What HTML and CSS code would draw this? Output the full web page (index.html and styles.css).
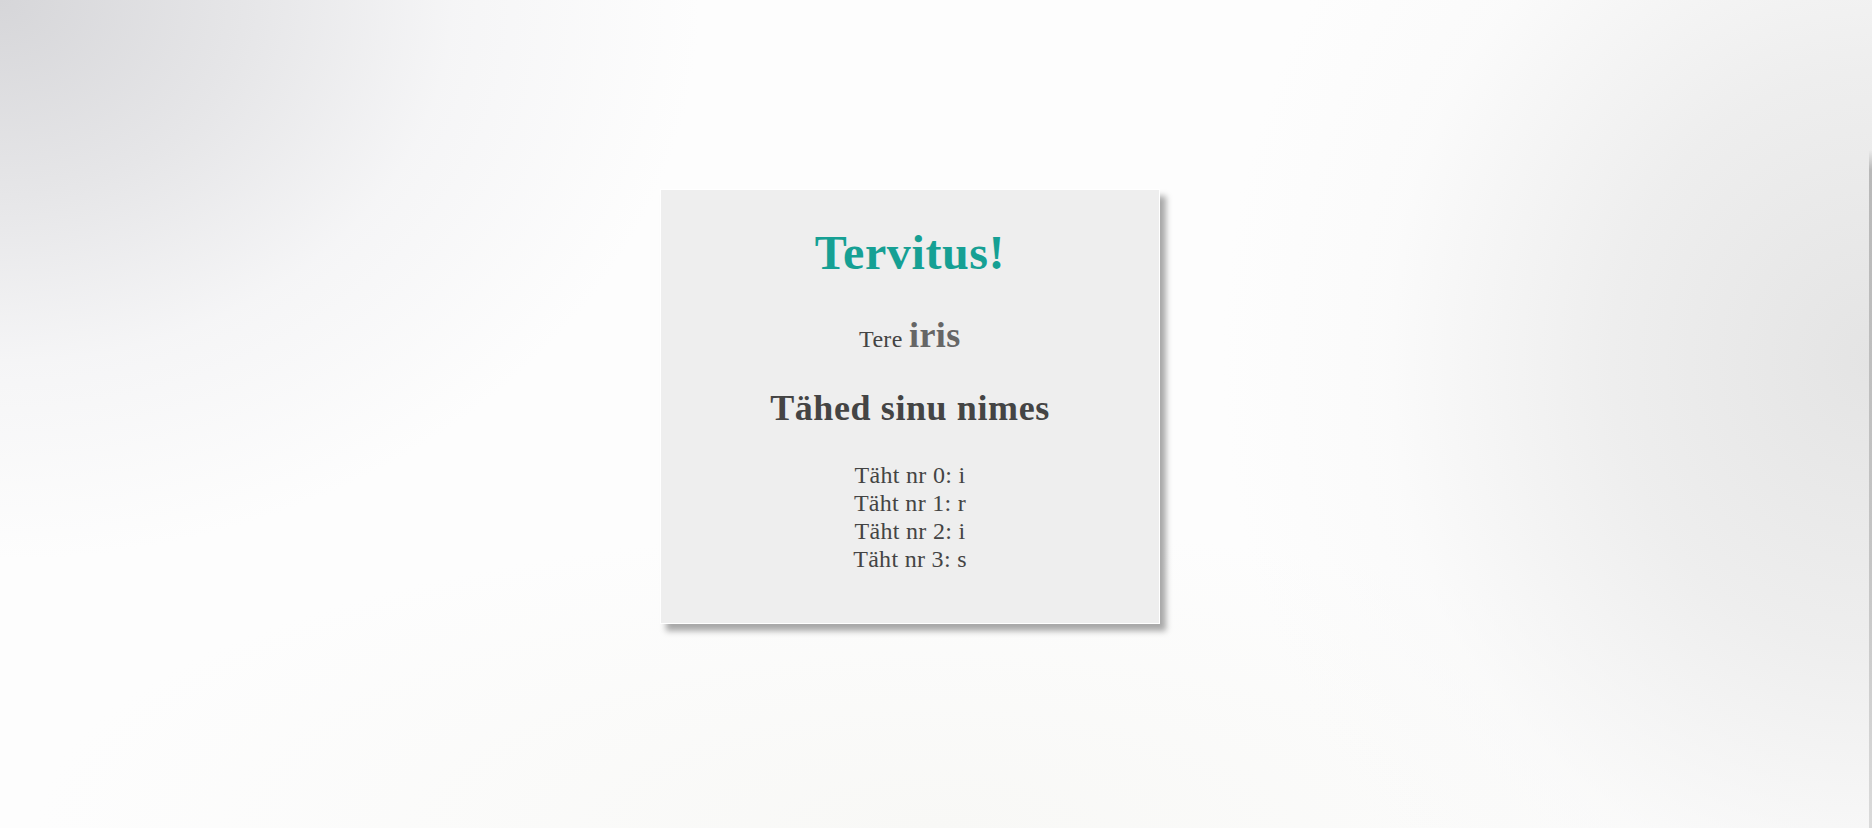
FILE: index.html
```html
<!DOCTYPE html>
<html lang="et">
<head>
<meta charset="utf-8">
<title>Tervitus</title>
<link rel="stylesheet" href="styles.css">
</head>
<body>
<div class="page">
  <div class="card">
    <h1 class="title">Tervitus!</h1>
    <p class="greet">Tere <b class="name">iris</b></p>
    <h2 class="subtitle">Tähed sinu nimes</h2>
    <div class="letters">
      <div class="letter">Täht nr 0: i</div>
      <div class="letter">Täht nr 1: r</div>
      <div class="letter">Täht nr 2: i</div>
      <div class="letter">Täht nr 3: s</div>
    </div>
  </div>
</div>
</body>
</html>
```
FILE: styles.css
```css
html, body {
  margin: 0;
  padding: 0;
  height: 100%;
}
body {
  font-family: "Liberation Serif", "Times New Roman", serif;
  font-size: 24px;
  color: #444;
  background:
    linear-gradient(180deg, rgba(0,0,0,0) 0, rgba(0,0,0,0) 150px, #b8b8b8 170px, #c4c4c4 560px, #dadada 100%) right top / 3px 100% no-repeat,
    radial-gradient(ellipse 700px 560px at 0px 0px, #d6d6d9 0%, #e6e6e8 35%, rgba(240,240,242,0.6) 65%, rgba(255,255,255,0) 100%),
    radial-gradient(ellipse 650px 720px at 1872px 360px, #e4e4e4 0%, #eeeeee 40%, rgba(248,248,248,0.5) 75%, rgba(255,255,255,0) 100%),
    radial-gradient(ellipse 900px 300px at 936px 828px, #f8f8f6 0%, rgba(252,252,250,0) 100%),
    #fdfdfd;
}
.page {
  display: flex;
  padding: 189px 0 0 660px;
}
.card {
  box-sizing: border-box;
  width: 500px;
  height: 435px;
  background: #eeeeee;
  border: 1px solid #ffffff;
  box-shadow: 6px 7px 6px #a8a8a8;
  text-align: center;
  padding-top: 3px;
}
.title {
  font-size: 48px;
  font-weight: bold;
  color: #16a094;
  letter-spacing: 0.6px;
  margin: 32px 0 34px;
}
.greet {
  margin: 0;
  letter-spacing: 0.3px;
}
.name {
  font-size: 36px;
  color: #666;
  letter-spacing: 0.5px;
}
.subtitle {
  font-size: 36px;
  font-weight: bold;
  color: #444;
  letter-spacing: 0.6px;
  margin: 31px 0 32px;
}
.letters {
  display: flex;
  flex-direction: column;
  align-items: center;
  line-height: 28px;
  letter-spacing: 0.3px;
}
```
